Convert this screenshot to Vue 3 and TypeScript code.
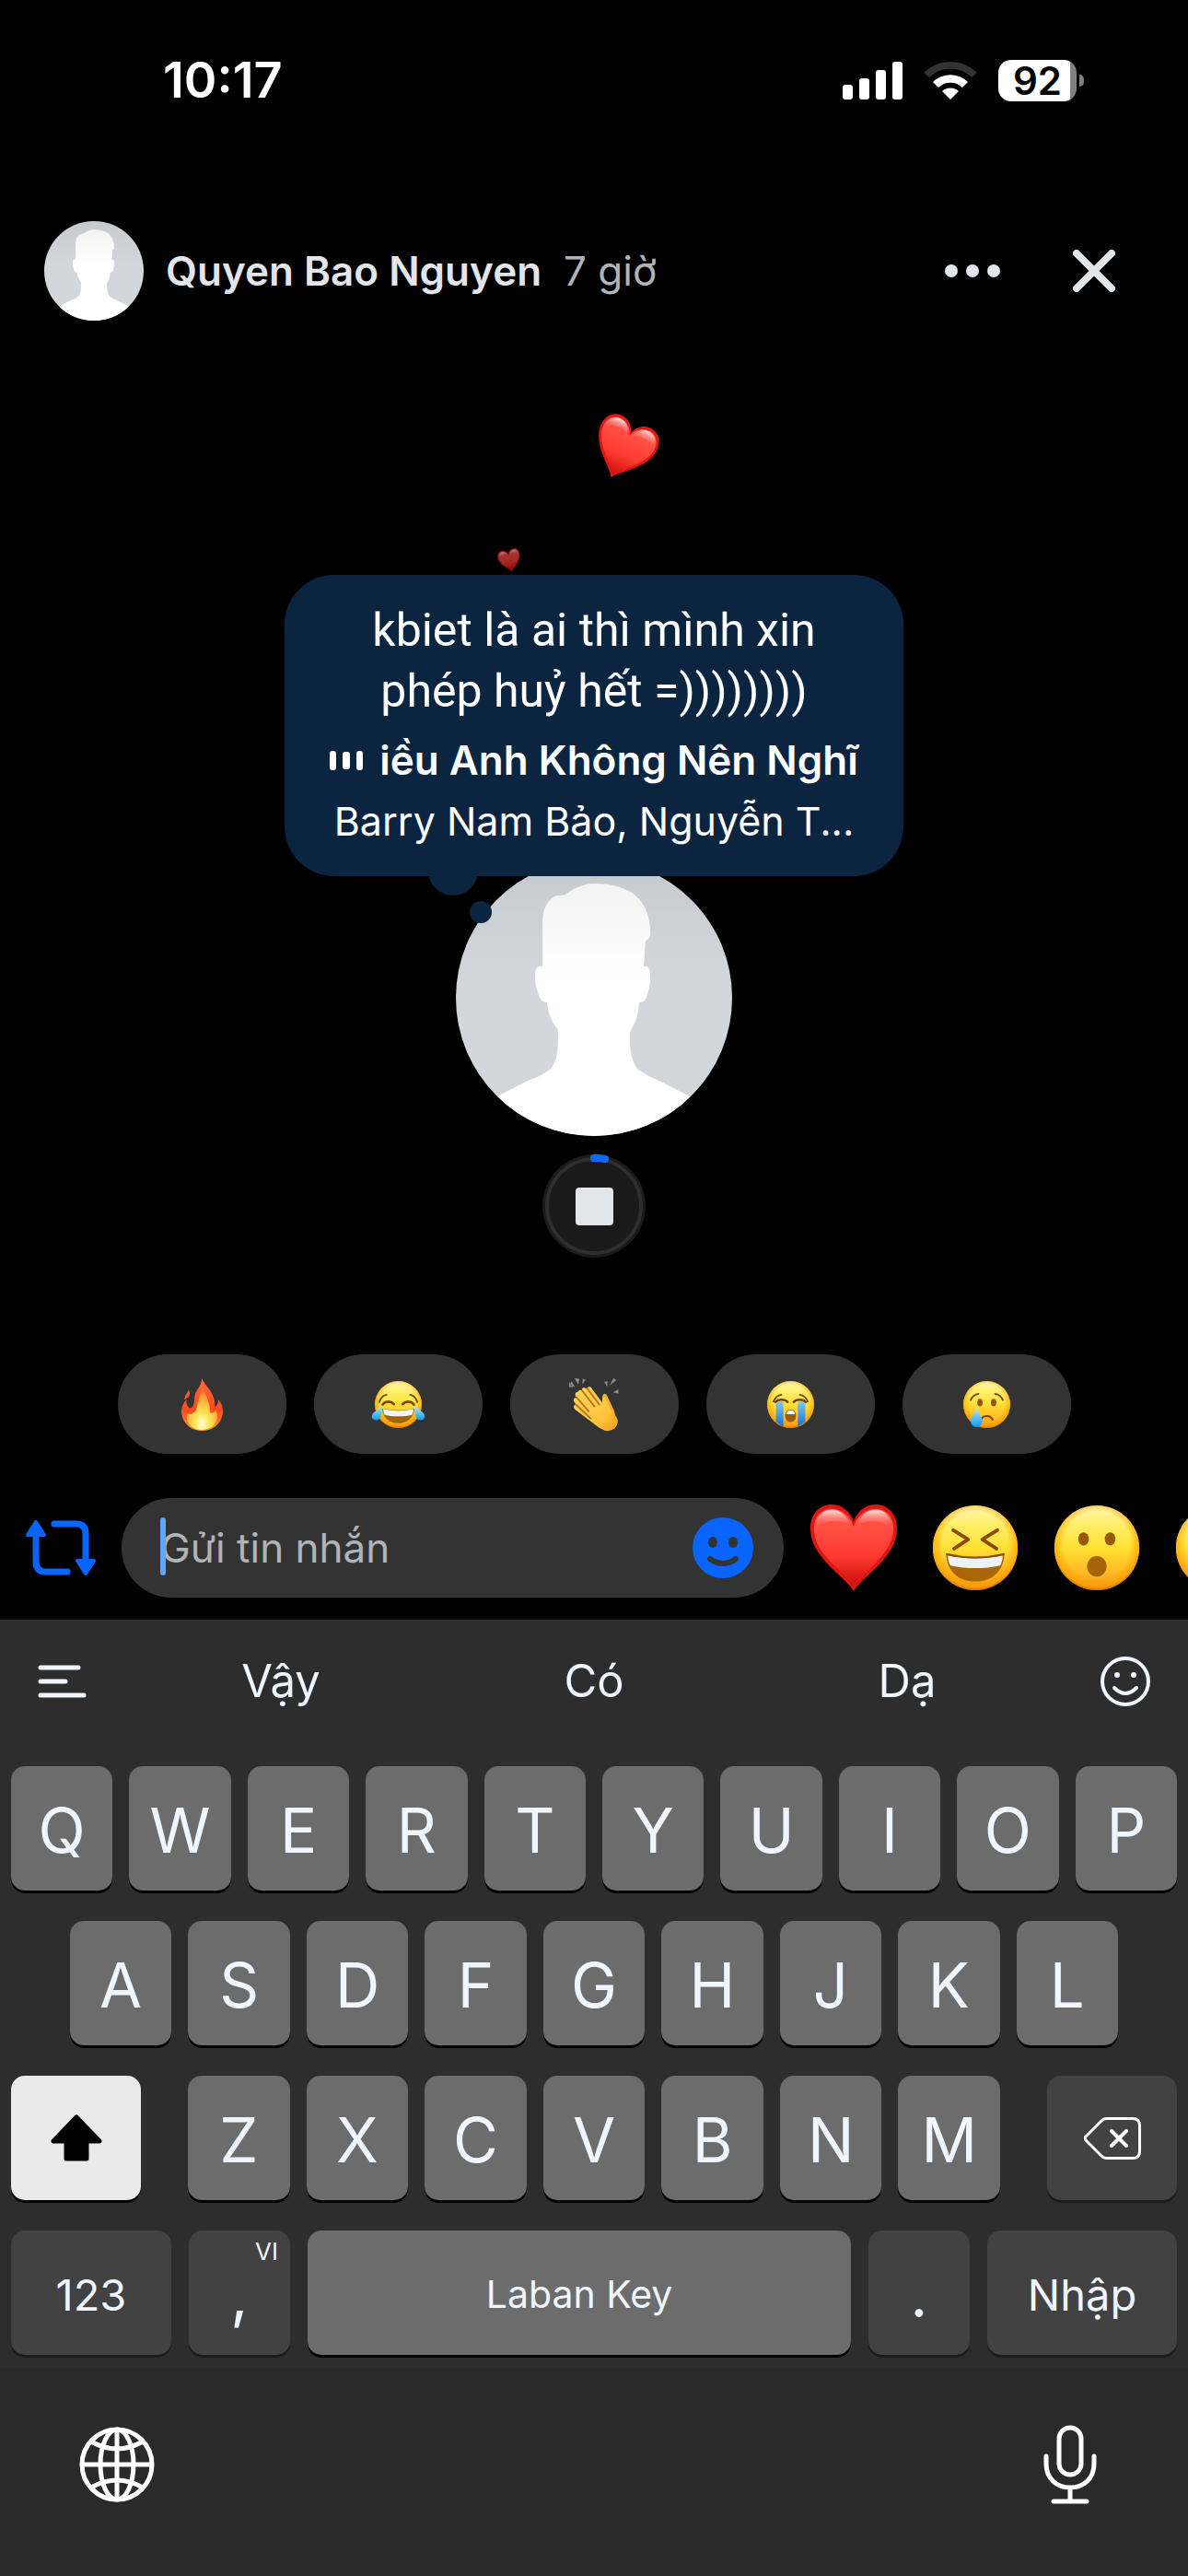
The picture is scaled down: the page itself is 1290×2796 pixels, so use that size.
<script setup lang="ts">
import { ref } from 'vue'

interface Reply {
  icon: string
  label: string
}

const quickReplies: Reply[] = [
  { icon: 'fire', label: 'Lửa' },
  { icon: 'joy', label: 'Cười ra nước mắt' },
  { icon: 'clap', label: 'Vỗ tay' },
  { icon: 'sob', label: 'Khóc to' },
  { icon: 'cry', label: 'Khóc' },
]

const reactions: Reply[] = [
  { icon: 'heart', label: 'Yêu thích' },
  { icon: 'laugh', label: 'Haha' },
  { icon: 'wow', label: 'Wow' },
  { icon: 'face', label: 'Buồn' },
]

const suggestions: string[] = ['Vậy', 'Có', 'Dạ']
const rowOne: string[] = [...'QWERTYUIOP']
const rowTwo: string[] = [...'ASDFGHJKL']
const rowThree: string[] = [...'ZXCVBNM']

const message = ref('')

function press(key: string): void {
  message.value += key
}
</script>

<template>
  <div class="screen">
    <svg class="sprites" width="0" height="0" aria-hidden="true">
      <defs>
        <linearGradient id="faceFill" x1="0" y1="0" x2="0" y2="1">
          <stop offset="0" stop-color="#fff5b8" />
          <stop offset="0.22" stop-color="#fff06a" />
          <stop offset="0.5" stop-color="#ffe033" />
          <stop offset="0.8" stop-color="#ffb824" />
          <stop offset="1" stop-color="#f09010" />
        </linearGradient>
        <radialGradient id="faceEdge" cx="0.5" cy="0.46" r="0.54">
          <stop offset="0.72" stop-color="#ffa200" stop-opacity="0" />
          <stop offset="0.93" stop-color="#ffa000" stop-opacity="0.75" />
          <stop offset="1" stop-color="#c96a00" stop-opacity="0.9" />
        </radialGradient>
        <linearGradient id="heartFill" x1="0" y1="0" x2="0" y2="1">
          <stop offset="0" stop-color="#ff5a50" />
          <stop offset="0.6" stop-color="#ff3b30" />
          <stop offset="1" stop-color="#c80d0a" />
        </linearGradient>
        <linearGradient id="heartShine" x1="0" y1="0" x2="0" y2="1">
          <stop offset="0" stop-color="#ffffff" stop-opacity="0.85" />
          <stop offset="1" stop-color="#ff6a60" stop-opacity="0" />
        </linearGradient>
        <linearGradient id="fireOuter" x1="0" y1="0" x2="0" y2="1">
          <stop offset="0" stop-color="#ff6a3c" />
          <stop offset="0.6" stop-color="#ff4a1f" />
          <stop offset="1" stop-color="#ff9420" />
        </linearGradient>
        <radialGradient id="fireInner" cx="0.5" cy="0.86" r="0.75">
          <stop offset="0" stop-color="#fffde0" />
          <stop offset="0.3" stop-color="#ffe95a" />
          <stop offset="0.7" stop-color="#ffb03a" />
          <stop offset="1" stop-color="#ff7a38" />
        </radialGradient>
        <linearGradient id="tearFill" x1="0" y1="0" x2="0" y2="1">
          <stop offset="0" stop-color="#b6e9ff" />
          <stop offset="1" stop-color="#0a9bff" />
        </linearGradient>
        <linearGradient id="streamFill" x1="0" y1="0" x2="0" y2="1">
          <stop offset="0" stop-color="#7cc8f8" />
          <stop offset="1" stop-color="#1270e0" />
        </linearGradient>
        <linearGradient id="handFill" x1="0" y1="0" x2="1" y2="1">
          <stop offset="0" stop-color="#ffd45c" />
          <stop offset="0.7" stop-color="#ffc33c" />
          <stop offset="1" stop-color="#f09a18" />
        </linearGradient>
        <linearGradient id="photoShade" x1="0" y1="0" x2="0" y2="1">
          <stop offset="0" stop-color="#000000" stop-opacity="0.06" />
          <stop offset="0.45" stop-color="#000000" stop-opacity="0" />
        </linearGradient>

        <symbol id="face" viewBox="0 0 100 100">
          <circle cx="50" cy="50" r="48" fill="url(#faceFill)" />
          <circle cx="50" cy="50" r="48" fill="url(#faceEdge)" />
        </symbol>

        <symbol id="heart" viewBox="0 0 100 100">
          <path d="M50 99C43 84 1 62 1 28 1 11 12 1 25 1c12 0 21 8 25 19C54 9 63 1 75 1c13 0 24 10 24 27 0 34-42 56-49 71Z" fill="#df1712" />
          <path d="M50 94C43 79 5 58 5 28 5 14 14 6 25 6c12 0 21 8 25 20C54 14 63 6 75 6c11 0 20 8 20 22 0 30-38 51-45 66Z" fill="url(#heartFill)" />
          <path d="M7 27C8 14 15 7 25 7c10 0 17 6 21 17-9-5-26-7-39 3ZM54 24C58 13 65 7 75 7c10 0 17 7 18 20-13-10-30-8-39-3Z" fill="url(#heartShine)" />
        </symbol>

        <symbol id="laugh" viewBox="0 0 100 100">
          <use href="#face" width="100" height="100" />
          <path d="M25 30 42 40.500 26 51M75 30 58 40.500 74 51" fill="none" stroke="#8a4a00" stroke-width="4" stroke-linecap="round" stroke-linejoin="round" />
          <path d="M17 57C38 62 62 62 83 57 82 77 69 88 50 88S18 77 17 57Z" fill="#a86808" />
          <path d="M19 58.500C39 63 61 63 81 58.500 81 63 80 67 78 70 60 74 40 74 22 70 20 67 19 63 19 58.500Z" fill="#eef1f5" />
          <path d="M17 57C38 62 62 62 83 57" fill="none" stroke="#84500a" stroke-width="2" />
        </symbol>

        <symbol id="wow" viewBox="0 0 100 100">
          <use href="#face" width="100" height="100" />
          <ellipse cx="35" cy="40" rx="6" ry="7.500" fill="#965a05" />
          <ellipse cx="65" cy="40" rx="6" ry="7.500" fill="#965a05" />
          <ellipse cx="50" cy="71" rx="11" ry="11.500" fill="#a56405" />
        </symbol>

        <symbol id="joy" viewBox="0 0 100 100">
          <use href="#face" width="100" height="100" />
          <path d="M11 45C14 36 19 31 26 30M89 45C86 36 81 31 74 30" fill="none" stroke="#7a4300" stroke-width="3.500" stroke-linecap="round" />
          <path d="M18 50C22 43 34 42 41 49M82 50C78 43 66 42 59 49" fill="none" stroke="#7a4300" stroke-width="5" stroke-linecap="round" />
          <path d="M17 58C38 63 62 63 83 58 82 77 69 88 50 88S18 77 17 58Z" fill="#a06408" />
          <path d="M19 59C39 64 61 64 81 59 81 64 80 68 78 71 60 75 40 75 22 71 20 68 19 64 19 59Z" fill="#f2f4f7" />
          <path d="M16 53C17 63 16 82 5 82-6 82-6 71 0 66 5 61 12 59 16 53ZM84 53C83 63 84 82 95 82 106 82 106 71 100 66 95 61 88 59 84 53Z" fill="url(#tearFill)" />
        </symbol>

        <symbol id="sob" viewBox="0 0 100 100">
          <use href="#face" width="100" height="100" />
          <path d="M15 44C18 36 23 31 31 30M85 44C82 36 77 31 69 30" fill="none" stroke="#7a4300" stroke-width="3.500" stroke-linecap="round" />
          <path d="M20 44H35V95C29 92 24 89 20 85ZM80 44H65V95C71 92 76 89 80 85Z" fill="url(#streamFill)" />
          <path d="M19 45C24 39 38 38 44 45M81 45C76 39 62 38 56 45" fill="none" stroke="#7a4300" stroke-width="4.500" stroke-linecap="round" />
          <rect x="39" y="60" width="22" height="26" rx="11" fill="#9a5f08" />
          <path d="M41 70C41 59 59 59 59 70Z" fill="#fff" />
        </symbol>

        <symbol id="cry" viewBox="0 0 100 100">
          <use href="#face" width="100" height="100" />
          <path d="M17 41C20 34 26 29 33 28M83 41C80 34 74 29 67 28" fill="none" stroke="#7a4300" stroke-width="3.500" stroke-linecap="round" />
          <ellipse cx="36" cy="46" rx="5.500" ry="8" fill="#8f5606" />
          <ellipse cx="64" cy="46" rx="5.500" ry="8" fill="#8f5606" />
          <path d="M38 82C41 72 56 70 62 81" fill="none" stroke="#7a4300" stroke-width="4" stroke-linecap="round" />
          <path d="M29 56C31 69 41 74 41 84a12 12 0 0 1-24 0C17 74 27 69 29 56Z" fill="url(#tearFill)" />
        </symbol>

        <symbol id="fire" viewBox="0 0 100 100">
          <path d="M49-5C54 12 78 24 76 56 80 53 83 47 83 40 90 46 94 58 92 70 88 92 70 104 50 104S12 92 8 70C6 57 12 46 18 39 17 48 20 54 25 58 32 56 34 48 34 38 36 18 50 14 49-5ZM22 20C28 28 24 36 14 40 13 32 20 28 22 20Z" fill="url(#fireOuter)" />
          <path d="M50 12C53 26 66 40 66 64 66 70 74 68 78 62 88 86 70 102 50 102S14 88 20 68C28 74 38 66 40 52 42 36 50 26 50 12Z" fill="url(#fireInner)" />
        </symbol>

        <symbol id="clap" viewBox="-3 0 100 100">
          <g transform="translate(-5 0)">
            <path d="M2 10 12 14 5 2ZM11-4 19 9 21-3ZM27 9 34-1 28-3ZM0 4 9 14 0 14ZM72 4 79 2 78 13ZM83 11 97 0 91-4ZM90 25 101 19 101 28Z" fill="#8f8f8f" />
            <path d="M68 34C70 26 75 26 78 32L92 62 96 76C102 84 100 96 88 102 80 105 74 105 68 100Z" fill="#f5ac2c" />
            <path d="M18 24C21 19 25 20 28 23L26 18C29 14 33 15 36 18L37 16C41 12 45 14 47 18L68 46C68 38 70 32 75 36L88 66C92 72 97 74 99 80 101 90 94 100 84 102 76 104 66 102 58 95L12 60C8 56 9 51 14 50L10 44C8 39 11 35 16 36L13 32C12 27 14 24 18 24Z" fill="url(#handFill)" />
            <path d="M16 36 40 64M14 50 44 78M27 22 52 54M37 17 62 50" fill="none" stroke="#b87410" stroke-width="3.500" stroke-linecap="round" />
          </g>
        </symbol>

        <symbol id="portrait" viewBox="0 0 300 300">
          <rect width="300" height="300" fill="#d3d6db" />
          <path
            d="M150 26C137 26 126 33 120 37 116 40 111 38 107 40 98 46 94 55 94 70L94 116C88 115 86 118 86 127 86 135 88 141 90 147 92 153 95 155 99 155 100 168 105 177 111 185 111 205 111 219 102 228 94 234 86 237 78 240L47 256 0 282V300H300V282L254 257 225 242C215 238 206 233 198 228 191 219 189 210 189 187 196 176 198 168 199 155 204 155 206 152 207 149 210 142 211 134 211 127 211 118 209 115 204 116L206 88C210 86 212 84 211 77 210 44 190 26 150 26Z"
            fill="#ffffff"
          />
          <rect width="300" height="300" fill="url(#photoShade)" />
        </symbol>
      </defs>
    </svg>

    <header class="status">
      <time class="clock">10:17</time>
      <div class="status-icons">
        <svg viewBox="0 0 65 41" class="signal" aria-hidden="true">
          <rect x="0" y="25" width="11" height="16" rx="3" />
          <rect x="18" y="18" width="11" height="23" rx="3" />
          <rect x="36" y="9" width="11" height="32" rx="3" />
          <rect x="54" y="0" width="11" height="41" rx="3" />
        </svg>
        <svg width="58" height="42" viewBox="0 0 58 42" class="wifi" aria-hidden="true">
          <path d="M0 13A41 41 0 0 1 58 13L52 18A33 33 0 0 0 6 18Z" fill="#333" />
          <path d="M10 23A27 27 0 0 1 48 23L42 29A19 19 0 0 0 16 29Z" />
          <path d="M20 33A13 13 0 0 1 38 33L29 42Z" />
        </svg>
        <div class="battery"><span class="battery-level">92</span></div>
      </div>
    </header>

    <section class="owner">
      <svg class="owner-photo" viewBox="0 0 300 300" aria-hidden="true"><use href="#portrait" width="300" height="300" /></svg>
      <h1 class="owner-name">Quyen Bao Nguyen</h1>
      <span class="owner-age">7 giờ</span>
      <button class="plain" type="button" aria-label="Thêm">
        <svg width="62" height="46" viewBox="0 0 62 46" fill="#e2e5ea">
          <circle cx="8" cy="23" r="7" /><circle cx="31" cy="23" r="7" /><circle cx="54" cy="23" r="7" />
        </svg>
      </button>
      <button class="plain close" type="button" aria-label="Đóng">
        <svg width="46" height="46" viewBox="0 0 46 46"><path d="M4 4 42 42M42 4 4 42" stroke="#e2e5ea" stroke-width="8" stroke-linecap="round" /></svg>
      </button>
    </section>

    <main class="stage">
      <div class="note">
        <svg class="float-heart large" viewBox="0 0 100 100" aria-hidden="true"><use href="#heart" width="100" height="100" /></svg>
        <svg class="float-heart small" viewBox="0 0 100 100" aria-hidden="true"><use href="#heart" width="100" height="100" /></svg>
        <i class="tail tail-big"></i>
        <i class="tail tail-small"></i>
        <p class="note-text">kbiet là ai thì mình xin<br />phép huỷ hết =))))))))</p>
        <p class="song">
          <svg width="36" height="21" viewBox="0 0 36 21" fill="#fff" aria-hidden="true">
            <rect x="0" y="0" width="7" height="21" rx="3" />
            <rect x="14" y="1" width="8" height="19" rx="3" />
            <rect x="29" y="0" width="7" height="21" rx="3" />
          </svg>
          <span>iều Anh Không Nên Nghĩ</span>
        </p>
        <p class="artist">Barry Nam Bảo, Nguyễn T...</p>
      </div>
      <svg class="photo" viewBox="0 0 300 300" aria-hidden="true"><use href="#portrait" width="300" height="300" /></svg>
      <button class="plain stop" type="button" aria-label="Dừng">
        <svg width="112" height="112" viewBox="0 0 112 112">
          <circle cx="56" cy="56" r="56" fill="#1a1a1a" />
          <circle cx="56" cy="56" r="51" fill="none" stroke="#2e2e2e" stroke-width="4" />
          <path d="M56 4A52 52 0 0 1 68 5" fill="none" stroke="#0f6bff" stroke-width="8" stroke-linecap="round" />
          <rect x="36" y="36" width="41" height="41" rx="4" fill="#e2e5ea" />
        </svg>
      </button>
    </main>

    <nav class="quick" aria-label="Trả lời nhanh">
      <button v-for="reply in quickReplies" :key="reply.icon" class="quick-pill" type="button" :aria-label="reply.label">
        <svg class="quick-icon" viewBox="0 0 100 100"><use :href="'#' + reply.icon" width="100" height="100" /></svg>
      </button>
    </nav>

    <form class="composer" @submit.prevent>
      <button class="plain" type="button" aria-label="Chia sẻ lại">
        <svg width="76" height="60" viewBox="0 0 76 60">
          <path d="M11 15V44Q11 56 21 56H45M31 4H55Q65 4 65 15V45" fill="none" stroke="#0866ff" stroke-width="7" stroke-linecap="round" />
          <path d="M11 2 20 16H2ZM65 58 56 44H74Z" fill="#0866ff" stroke="#0866ff" stroke-width="4" stroke-linejoin="round" />
        </svg>
      </button>
      <div class="field">
        <i class="caret"></i>
        <input v-model="message" class="field-input" type="text" placeholder="Gửi tin nhắn" aria-label="Gửi tin nhắn" />
        <button class="plain" type="button" aria-label="Nhãn dán">
          <svg width="66" height="66" viewBox="0 0 66 66">
            <circle cx="33" cy="33" r="33" fill="#0866ff" />
            <ellipse cx="22" cy="27" rx="5" ry="6" fill="#333" /><ellipse cx="44" cy="27" rx="5" ry="6" fill="#333" />
            <path d="M19 45Q33 55 47 45" fill="none" stroke="#333" stroke-width="6" stroke-linecap="round" />
          </svg>
        </button>
      </div>
      <div class="reactions">
        <button v-for="item in reactions" :key="item.icon" class="plain" type="button" :aria-label="item.label">
          <svg width="96" height="96" viewBox="0 0 100 100"><use :href="'#' + item.icon" width="100" height="100" /></svg>
        </button>
      </div>
    </form>

    <section class="keyboard">
      <div class="suggest">
        <button class="plain suggest-side" type="button" aria-label="Menu">
          <svg width="54" height="36" viewBox="0 0 54 36"><path d="M3 3H44M3 18H30M3 33H50" stroke="#f0f6ff" stroke-width="5" stroke-linecap="round" /></svg>
        </button>
        <div class="words">
          <button v-for="word in suggestions" :key="word" class="plain suggest-word" type="button">{{ word }}</button>
        </div>
        <button class="plain suggest-side" type="button" aria-label="Biểu tượng cảm xúc">
          <svg width="54" height="54" viewBox="0 0 54 54" fill="none" stroke="#f0f6ff">
            <circle cx="27" cy="27" r="25" stroke-width="4" />
            <circle cx="18" cy="20" r="3" fill="#f0f6ff" stroke="none" /><circle cx="36" cy="20" r="3" fill="#f0f6ff" stroke="none" />
            <path d="M15 34Q27 46 39 34" stroke-width="4" stroke-linecap="round" />
          </svg>
        </button>
      </div>

      <div class="keys">
        <div class="row">
          <button v-for="k in rowOne" :key="k" class="key" type="button" @click="press(k)">{{ k }}</button>
        </div>
        <div class="row inset">
          <button v-for="k in rowTwo" :key="k" class="key" type="button" @click="press(k)">{{ k }}</button>
        </div>
        <div class="row wide">
          <button class="key side shift" type="button" aria-label="Shift">
            <svg width="58" height="52" viewBox="0 0 58 52"><path d="M29 3 54 29H40V48H18V29H4Z" stroke="#000" stroke-width="5" stroke-linejoin="round" /></svg>
          </button>
          <div class="row letters">
            <button v-for="k in rowThree" :key="k" class="key" type="button" @click="press(k)">{{ k }}</button>
          </div>
          <button class="key side dark" type="button" aria-label="Xóa" @click="message = message.slice(0, -1)">
            <svg width="62" height="46" viewBox="0 0 62 46" fill="none" stroke="#fff" stroke-linejoin="round" stroke-linecap="round">
              <path d="M24 1.500H53Q60.500 1.500 60.500 9V37Q60.500 44.500 53 44.500H24Q21 44.500 19 42L2 25Q0 23 2 21L19 4Q21 1.500 24 1.500Z" stroke-width="3" />
              <path d="M30 15 46 31M46 15 30 31" stroke-width="4" />
            </svg>
          </button>
        </div>
        <div class="row bottom">
          <button class="key dark word numbers" type="button">123</button>
          <button class="key dark mark" type="button" @click="press(',')"><sup class="lang">VI</sup>,</button>
          <button class="key space" type="button" @click="press(' ')">Laban Key</button>
          <button class="key dark mark" type="button" @click="press('.')">.</button>
          <button class="key dark word enter" type="submit">Nhập</button>
        </div>
      </div>

      <div class="dock">
        <button class="plain" type="button" aria-label="Đổi bàn phím">
          <svg width="82" height="82" viewBox="0 0 82 82" fill="none" stroke="#fff" stroke-width="5">
            <circle cx="41" cy="41" r="38" /><ellipse cx="41" cy="41" rx="18" ry="38" />
            <path d="M41 3V79M3 41H79M13 16Q41 32 69 16M13 66Q41 50 69 66" />
          </svg>
        </button>
        <button class="plain" type="button" aria-label="Đọc chính tả">
          <svg width="58" height="86" viewBox="0 0 58 86" fill="none" stroke="#fff" stroke-width="5" stroke-linecap="round">
            <rect x="17" y="3" width="24" height="51" rx="12" /><path d="M3 34V42C3 58 14 68 29 68S55 58 55 42V34M29 68V82M11 83H47" />
          </svg>
        </button>
      </div>
    </section>
  </div>
</template>

<style>
body {
  margin: 0;
  background: #000;
}
</style>

<style scoped>
.screen {
  display: flex;
  flex-direction: column;
  min-height: 100vh;
  overflow: hidden;
  background: #000;
  color: #fff;
  font-family: Inter, "Noto Sans", sans-serif;
}

.sprites {
  position: absolute;
}

svg {
  display: block;
  flex: none;
}

p,
h1 {
  margin: 0;
}

button {
  padding: 0;
  border: 0;
  color: inherit;
  font: inherit;
  cursor: pointer;
}

.plain {
  display: flex;
  align-items: center;
  justify-content: center;
  flex: none;
  background: none;
}

.status {
  display: flex;
  align-items: center;
  justify-content: space-between;
  height: 48px;
  padding: 63px 113px 0 177px;
}

.clock {
  font-size: 54px;
  font-weight: 600;
  line-height: 48px;
}

.status-icons {
  display: flex;
  align-items: center;
  gap: 23px;
}

.signal {
  width: 65px;
  height: 41px;
  fill: #fff;
}

.wifi {
  fill: #fff;
}

.battery {
  position: relative;
  display: flex;
  align-items: center;
  justify-content: center;
  width: 85px;
  height: 45px;
  margin-right: 8px;
  border-radius: 14px;
  background: linear-gradient(90deg, #fff 78px, #808080 78px);
  color: #000;
}

.battery::after {
  content: "";
  position: absolute;
  top: 16px;
  right: -8px;
  width: 5px;
  height: 13px;
  border-radius: 0 6px 6px 0;
  background: #808080;
}

.battery-level {
  font-size: 42px;
  font-weight: 600;
  line-height: 45px;
}

.owner {
  display: flex;
  align-items: center;
  padding: 129px 79px 0 48px;
}

.owner-photo {
  width: 108px;
  height: 108px;
  margin-right: 24px;
  border-radius: 50%;
}

.owner-name {
  margin-right: 24px;
  color: #e2e5ea;
  font-size: 44px;
  font-weight: 600;
  line-height: 54px;
  white-space: nowrap;
}

.owner-age {
  margin-right: auto;
  color: #b0b3b8;
  font-size: 44px;
  line-height: 54px;
}

.close {
  margin-left: 78px;
}

.stage {
  display: flex;
  flex: 1;
  flex-direction: column;
  align-items: center;
  padding-top: 276px;
}

.note {
  position: relative;
  z-index: 1;
  box-sizing: border-box;
  width: 672px;
  max-width: 100%;
  padding: 27px 0;
  border-radius: 54px;
  background: #0b2540;
  text-align: center;
  white-space: nowrap;
}

.note-text {
  margin-bottom: 9px;
  font-family: Roboto, Inter, sans-serif;
  font-size: 50px;
  line-height: 66px;
}

.song {
  display: flex;
  align-items: center;
  justify-content: center;
  gap: 18px;
  font-size: 44px;
  font-weight: 600;
  line-height: 66px;
}

.artist {
  font-size: 43px;
  line-height: 66px;
}

.tail {
  position: absolute;
  border-radius: 50%;
  background: #0b2540;
}

.tail-big {
  top: 294px;
  left: 156px;
  width: 54px;
  height: 54px;
}

.tail-small {
  top: 354px;
  left: 201px;
  width: 24px;
  height: 24px;
}

.float-heart {
  position: absolute;
}

.float-heart.large {
  top: -170px;
  left: 334px;
  width: 68px;
  height: 68px;
  transform: rotate(24deg);
}

.float-heart.small {
  top: -28px;
  left: 232px;
  width: 25px;
  height: 25px;
  opacity: 0.65;
  transform: rotate(-12deg);
}

.photo {
  width: 300px;
  height: 300px;
  margin-top: -18px;
  border-radius: 50%;
}

.stop {
  margin-top: 20px;
}

.quick {
  display: flex;
  justify-content: center;
  gap: 30px;
}

.quick-pill {
  display: flex;
  align-items: center;
  justify-content: center;
  width: 183px;
  height: 108px;
  border-radius: 54px;
  background: #333;
}

.quick-icon {
  width: 53px;
  height: 53px;
  overflow: visible;
}

symbol {
  overflow: visible;
}

.composer {
  display: flex;
  align-items: center;
  gap: 28px;
  padding: 48px 0 24px 28px;
}

.field {
  position: relative;
  display: flex;
  align-items: center;
  flex: 1;
  box-sizing: border-box;
  min-width: 0;
  height: 108px;
  padding: 0 33px 0 42px;
  border-radius: 54px;
  background: #333;
}

.field-input {
  flex: 1;
  min-width: 0;
  padding: 0;
  border: 0;
  outline: 0;
  background: none;
  color: #e2e5ea;
  font: inherit;
  font-size: 44px;
  line-height: 60px;
}

.field-input::placeholder {
  color: #b0b3b8;
  opacity: 1;
}

.caret {
  position: absolute;
  top: 21px;
  left: 42px;
  width: 6px;
  height: 63px;
  border-radius: 3px;
  background: #5aa7ff;
}

.reactions {
  display: flex;
  gap: 36px;
  flex: 0 0 411px;
  overflow: hidden;
}

.keyboard {
  background: #2d2d2d;
  color: #f0f6ff;
}

.suggest {
  display: flex;
  align-items: center;
  height: 134px;
  padding: 0 12px;
}

.suggest-side {
  width: 112px;
}

.words {
  display: flex;
  flex: 1;
  padding: 0 11px;
}

.suggest-word {
  flex: 1;
  font-size: 49px;
  line-height: 66px;
}

.keys {
  display: flex;
  flex-direction: column;
  gap: 33px;
  padding: 25px 12px 15px;
}

.row {
  display: flex;
  gap: 18px;
}

.inset {
  padding: 0 64px;
}

.wide {
  gap: 51px;
}

.bottom {
  gap: 19px;
}

.letters {
  flex: 1;
}

.key {
  position: relative;
  display: flex;
  align-items: center;
  justify-content: center;
  flex: 1 1 0;
  box-sizing: border-box;
  min-width: 0;
  height: 135px;
  padding-top: 3px;
  border-radius: 15px;
  background: #6c6c6c;
  box-shadow: 0 3px 0 #000;
  font-size: 67px;
}

.side {
  flex: 0 0 141px;
  padding-top: 0;
}

.shift {
  background: #eaeaea;
}

.dark {
  background: #424242;
  box-shadow: 0 3px 0 #1b1b1b;
}

.word {
  font-size: 47px;
}

.numbers {
  flex: 0 0 174px;
}

.mark {
  flex: 0 0 110px;
}

.space {
  font-size: 41px;
}

.enter {
  flex: 0 0 206px;
}

.lang {
  position: absolute;
  top: 6px;
  right: 13px;
  font-size: 26px;
  line-height: 33px;
}

.dock {
  display: flex;
  align-items: center;
  justify-content: space-between;
  height: 225px;
  padding: 0 99px 0 86px;
  background: #2a2a2a;
}

.dock .plain {
  margin-bottom: 18px;
}
</style>
